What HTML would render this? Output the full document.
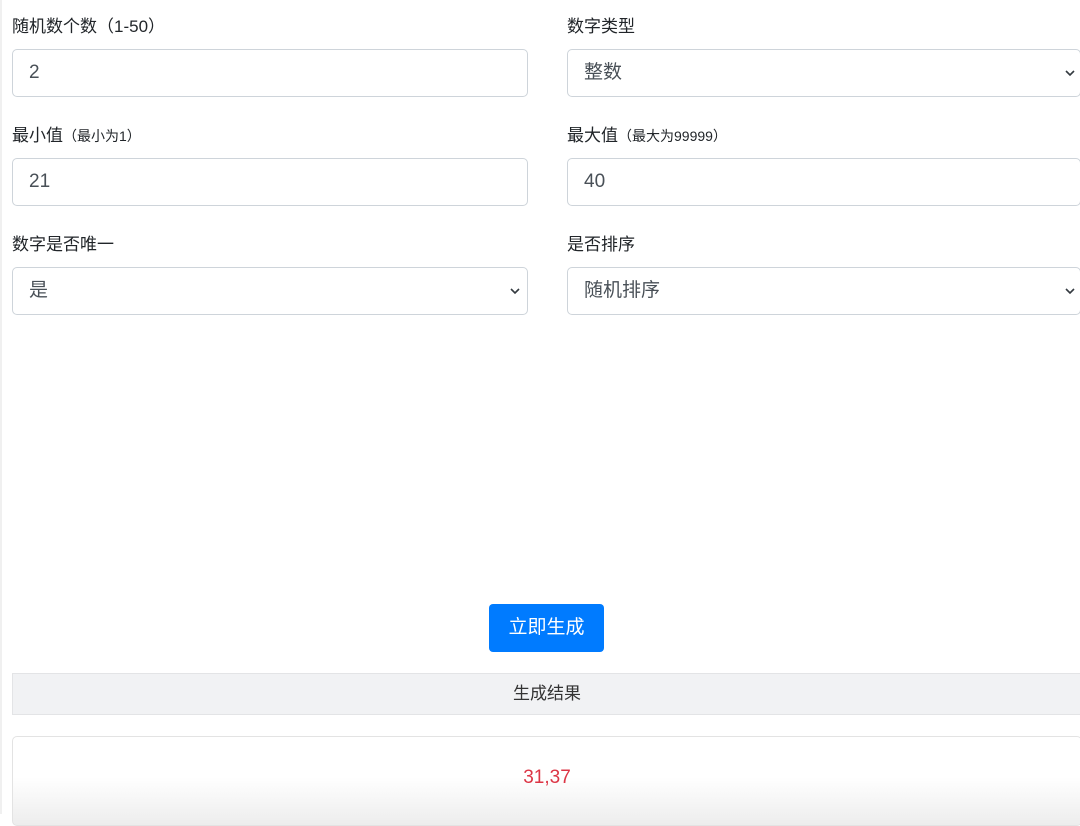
<!DOCTYPE html>
<html><head><meta charset="utf-8">
<style>
*{box-sizing:border-box;margin:0;padding:0}
body{width:1080px;height:814px;overflow:hidden;background:#fff;position:relative;font-family:"Liberation Sans","Noto Sans CJK SC",sans-serif;color:#212529}
.edge{position:absolute;left:0;top:0;width:2px;height:814px;background:#f0f0f0}
.lbl{position:absolute;font-size:17px;line-height:20px;color:#212529}
.lbl small{font-size:14px}
.inp{position:absolute;height:48px;border:1px solid #ced4da;border-radius:5px;background:#fff;font-size:19px;color:#495057;padding-left:16px;line-height:46px}
.chev{position:absolute;right:4px;top:19px}
.btn{position:absolute;left:489px;top:604px;width:115px;height:48px;background:#007bff;border-radius:4px;color:#fff;font-size:19px;text-align:center;line-height:48px}
.hdr{position:absolute;left:12px;top:673px;width:1070px;height:42px;background:#f1f2f4;border:1px solid #e3e4e6;text-align:center;font-size:17px;line-height:40px;color:#333}
.res{position:absolute;left:12px;top:736px;width:1070px;height:90px;border:1px solid #e3e3e3;border-radius:5px;background:linear-gradient(#fff 0,#fff 40px,#ececec 90px);text-align:center;color:#dc3545;font-size:19px;padding-top:30px}
</style></head><body>
<div class="edge"></div>
<div class="lbl" style="left:12px;top:17px">随机数个数（1-50）</div>
<div class="lbl" style="left:567px;top:17px">数字类型</div>
<div class="inp" style="left:12px;top:49px;width:516px">2</div>
<div class="inp" style="left:567px;top:49px;width:514px">整数<svg class="chev" width="12" height="8" viewBox="0 0 12 8"><path d="M2 2l4 4 4-4" fill="none" stroke="#343a40" stroke-width="1.6"/></svg></div>
<div class="lbl" style="left:12px;top:126px">最小值<small>（最小为1）</small></div>
<div class="lbl" style="left:567px;top:126px">最大值<small>（最大为99999）</small></div>
<div class="inp" style="left:12px;top:158px;width:516px">21</div>
<div class="inp" style="left:567px;top:158px;width:514px">40</div>
<div class="lbl" style="left:12px;top:235px">数字是否唯一</div>
<div class="lbl" style="left:567px;top:235px">是否排序</div>
<div class="inp" style="left:12px;top:267px;width:516px">是<svg class="chev" style="right:6px" width="12" height="8" viewBox="0 0 12 8"><path d="M2 2l4 4 4-4" fill="none" stroke="#343a40" stroke-width="1.6"/></svg></div>
<div class="inp" style="left:567px;top:267px;width:514px">随机排序<svg class="chev" width="12" height="8" viewBox="0 0 12 8"><path d="M2 2l4 4 4-4" fill="none" stroke="#343a40" stroke-width="1.6"/></svg></div>
<div class="btn">立即生成</div>
<div class="hdr">生成结果</div>
<div class="res">31,37</div>
</body></html>
